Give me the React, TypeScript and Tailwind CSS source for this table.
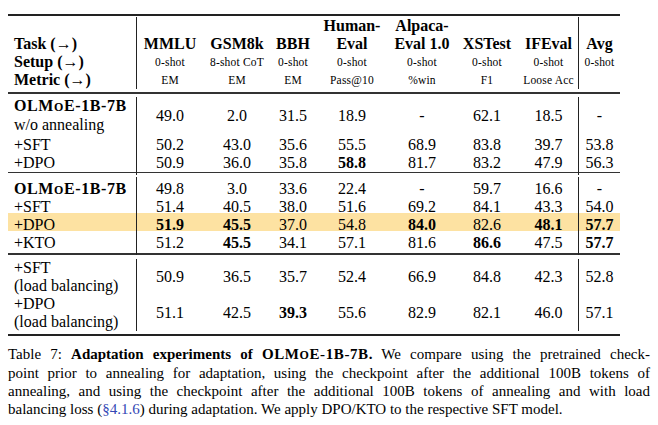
import type { ReactNode } from 'react';

const grid = 'grid grid-cols-[129px_66px_68px_44px_74px_66px_64px_60px_41px]';

const Olmoe = () => (
  <span className="tracking-[0.6px]">
    OLM<span className="text-[12px]">O</span>E-1B-7B
  </span>
);

type HeadCol = { top?: string; name: string; setup: string; metric?: string };

const headCols: HeadCol[] = [
  { name: 'MMLU', setup: '0-shot', metric: 'EM' },
  { name: 'GSM8k', setup: '8-shot CoT', metric: 'EM' },
  { name: 'BBH', setup: '0-shot', metric: 'EM' },
  { top: 'Human-', name: 'Eval', setup: '0-shot', metric: 'Pass@10' },
  { top: 'Alpaca-', name: 'Eval 1.0', setup: '0-shot', metric: '%win' },
  { name: 'XSTest', setup: '0-shot', metric: 'F1' },
  { name: 'IFEval', setup: '0-shot', metric: 'Loose Acc' },
  { name: 'Avg', setup: '0-shot' },
];

const Rule = ({ thick }: { thick?: boolean }) => (
  <div className={thick ? 'h-[2px] bg-[#222]' : 'h-[1.5px] bg-[#333]'} />
);

const Header = () => (
  <div className={`${grid} pt-[1px] pb-[3px]`}>
    <div className="flex flex-col border-r border-[#222] pl-[6px] text-[16px] font-bold">
      <div className="h-[18px]" />
      <div className="h-[18px] leading-[18px]">Task (→)</div>
      <div className="h-[18px] leading-[18px]">Setup (→)</div>
      <div className="h-[18px] leading-[18px]">Metric (→)</div>
    </div>
    {headCols.map((c, i) => (
      <div
        key={c.name}
        className={`flex flex-col items-center text-center ${i === 6 ? 'border-r border-[#222]' : ''}`}
      >
        <div className="h-[18px] leading-[18px] text-[16px] font-bold">{c.top ?? ''}</div>
        <div className="h-[18px] leading-[18px] text-[16px] font-bold whitespace-nowrap">{c.name}</div>
        <div className="h-[18px] leading-[18px] text-[11.5px] tracking-[0.2px] whitespace-nowrap">{c.setup}</div>
        <div className="h-[18px] leading-[18px] text-[11.5px] tracking-[0.2px] whitespace-nowrap">{c.metric ?? ''}</div>
      </div>
    ))}
  </div>
);

type RowProps = {
  label: ReactNode;
  values: string[];
  h: string;
  hl?: boolean;
};

const Row = ({ label, values, h, hl }: RowProps) => (
  <div className={`${grid} ${h} ${hl ? 'bg-[#fde2a2]' : ''} text-[16px]`}>
    <div className="flex flex-col justify-center border-r border-[#222] pl-[6px] leading-[18px]">{label}</div>
    {values.map((v, i) => {
      const bold = v.startsWith('*');
      return (
        <div
          key={i}
          className={`flex items-center justify-center ${bold ? 'font-bold' : ''} ${i === 6 ? 'border-r border-[#222]' : ''}`}
        >
          {bold ? v.slice(1) : v}
        </div>
      );
    })}
  </div>
);

export default function App() {
  return (
    <div className="w-[658px] h-[425px] bg-white text-black [font-family:'Liberation_Serif',serif] pt-[14px] pl-[8px]">
      <div className="w-[612px]">
        <Rule thick />
        <Header />
        <Rule />

        <div className="pt-[3px] pb-[3px]">
          <div className={`${grid} h-[36px] text-[16px]`}>
            <div className="flex flex-col border-r border-[#222] pl-[6px] leading-[17px]">
              <span className="font-bold">
                <Olmoe />
              </span>
              <span>w/o annealing</span>
            </div>
            {['49.0', '2.0', '31.5', '18.9', '-', '62.1', '18.5', '-'].map((v, i) => (
              <div
                key={i}
                className={`flex items-center justify-center pt-[2px] ${i === 6 ? 'border-r border-[#222]' : ''}`}
              >
                {v}
              </div>
            ))}
          </div>
          <Row h="h-[18px]" label="+SFT" values={['50.2', '43.0', '35.6', '55.5', '68.9', '83.8', '39.7', '53.8']} />
          <Row h="h-[18px]" label="+DPO" values={['50.9', '36.0', '35.8', '*58.8', '81.7', '83.2', '47.9', '56.3']} />
        </div>
        <Rule />

        <div className="pt-[4px] pb-[4px]">
          <Row
            h="h-[18px]"
            label={
              <span className="font-bold">
                <Olmoe />
              </span>
            }
            values={['49.8', '3.0', '33.6', '22.4', '-', '59.7', '16.6', '-']}
          />
          <Row h="h-[18px]" label="+SFT" values={['51.4', '40.5', '38.0', '51.6', '69.2', '84.1', '43.3', '54.0']} />
          <Row hl h="h-[18px]" label="+DPO" values={['*51.9', '*45.5', '37.0', '54.8', '*84.0', '82.6', '*48.1', '*57.7']} />
          <Row h="h-[18px]" label="+KTO" values={['51.2', '*45.5', '34.1', '57.1', '81.6', '*86.6', '47.5', '*57.7']} />
        </div>
        <Rule />

        <div className="pt-[4px] pb-[3px]">
          <Row
            h="h-[36px]"
            label={
              <>
                <span>+SFT</span>
                <span>(load balancing)</span>
              </>
            }
            values={['50.9', '36.5', '35.7', '52.4', '66.9', '84.8', '42.3', '52.8']}
          />
          <Row
            h="h-[36px]"
            label={
              <>
                <span>+DPO</span>
                <span>(load balancing)</span>
              </>
            }
            values={['51.1', '42.5', '*39.3', '55.6', '82.9', '82.1', '46.0', '57.1']}
          />
        </div>
        <Rule thick />
      </div>

      <div className="w-[642px] mt-[9px] text-[15px] leading-[18px]">
        <div className="text-justify [text-align-last:justify] whitespace-nowrap">
          Table 7: <span className="font-bold">Adaptation experiments of <Olmoe />.</span> We compare using the pretrained check-
        </div>
        <div className="text-justify [text-align-last:justify] whitespace-nowrap">
          point prior to annealing for adaptation, using the checkpoint after the additional 100B tokens of
        </div>
        <div className="text-justify [text-align-last:justify] whitespace-nowrap">
          annealing, and using the checkpoint after the additional 100B tokens of annealing and with load
        </div>
        <div className="whitespace-nowrap">
          balancing loss (<span className="text-[#3347b5]">§4.1.6</span>) during adaptation. We apply DPO/KTO to the respective SFT model.
        </div>
      </div>
    </div>
  );
}
